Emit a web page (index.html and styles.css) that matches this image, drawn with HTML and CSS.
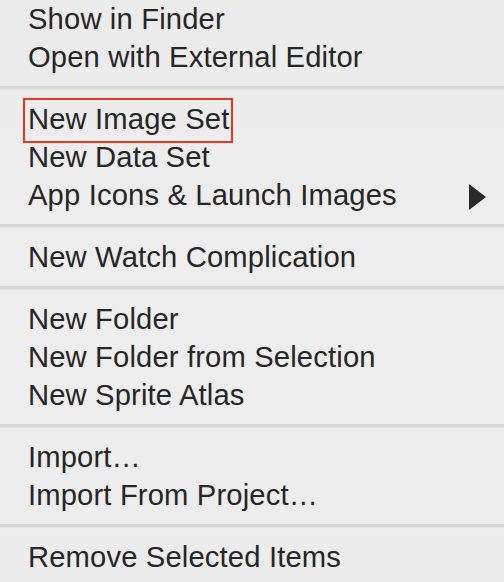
FILE: index.html
```html
<!DOCTYPE html>
<html>
<head>
<meta charset="utf-8">
<link rel="stylesheet" href="styles.css">
</head>
<body>
<div class="menu">
  <div class="item">Show in Finder</div>
  <div class="item">Open with External Editor</div>
  <div class="sep"></div>
  <div class="item highlight-row"><span class="label">New Image Set</span><span class="annot"></span></div>
  <div class="item">New Data Set</div>
  <div class="item submenu"><span class="label">App Icons &amp; Launch Images</span><span class="arrow"></span></div>
  <div class="sep"></div>
  <div class="item">New Watch Complication</div>
  <div class="sep"></div>
  <div class="item">New Folder</div>
  <div class="item">New Folder from Selection</div>
  <div class="item">New Sprite Atlas</div>
  <div class="sep"></div>
  <div class="item">Import…</div>
  <div class="item">Import From Project…</div>
  <div class="sep"></div>
  <div class="item">Remove Selected Items</div>
</div>
</body>
</html>
```
FILE: styles.css
```css
html, body {
  margin: 0;
  padding: 0;
}
body {
  width: 504px;
  height: 582px;
  overflow: hidden;
  background: linear-gradient(180deg, #ebebeb 0%, #eeeeee 50%, #ececec 100%);
  font-family: "Liberation Sans", Arial, sans-serif;
  color: #262626;
}
.menu {
  display: flex;
  flex-direction: column;
}
.item {
  position: relative;
  height: 38px;
  line-height: 38px;
  padding-left: 28px;
  font-size: 29.2px;
  letter-spacing: 0.15px;
  white-space: nowrap;
  display: flex;
  align-items: center;
}
.sep {
  height: 24px;
  display: flex;
  align-items: center;
}
.sep::before {
  content: "";
  display: block;
  width: 100%;
  height: 3px;
  margin-top: -1px;
  background: #d7d7d7;
  border-bottom: 1px solid #e2e2e2;
}
.annot {
  position: absolute;
  left: 23px;
  top: -2px;
  width: 206px;
  height: 41px;
  border: 2px solid #e8371c;
}
.submenu {
  justify-content: space-between;
  padding-right: 18px;
}
.arrow {
  width: 0;
  height: 0;
  border-top: 13px solid transparent;
  border-bottom: 13px solid transparent;
  border-left: 17px solid #2a2a2a;
  margin-top: 4px;
}
```
